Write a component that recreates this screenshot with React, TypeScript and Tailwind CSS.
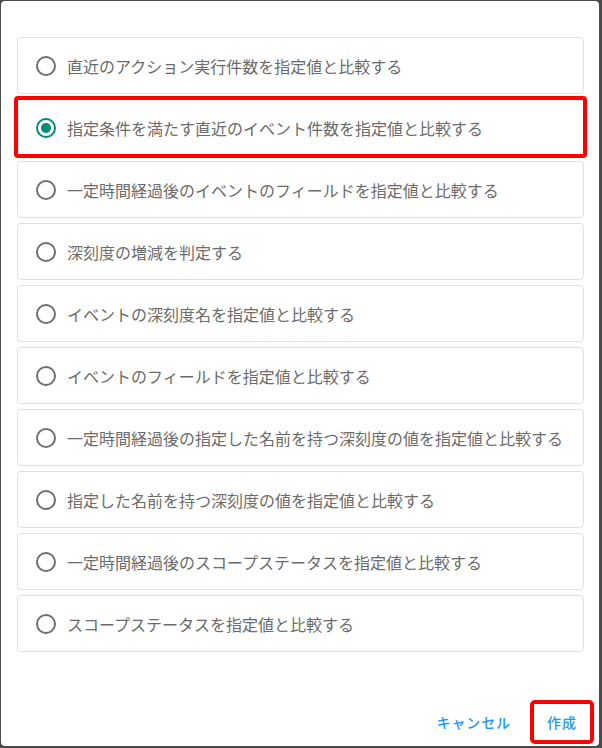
const options = [
  '直近のアクション実行件数を指定値と比較する',
  '指定条件を満たす直近のイベント件数を指定値と比較する',
  '一定時間経過後のイベントのフィールドを指定値と比較する',
  '深刻度の増減を判定する',
  'イベントの深刻度名を指定値と比較する',
  'イベントのフィールドを指定値と比較する',
  '一定時間経過後の指定した名前を持つ深刻度の値を指定値と比較する',
  '指定した名前を持つ深刻度の値を指定値と比較する',
  '一定時間経過後のスコープステータスを指定値と比較する',
  'スコープステータスを指定値と比較する',
];

const SELECTED = 1;

function Radio({ checked }: { checked: boolean }) {
  return (
    <span
      className={`flex h-[20px] w-[20px] shrink-0 items-center justify-center rounded-full border-2 ${
        checked ? 'border-[#00897b]' : 'border-[#6f6f6f]'
      }`}
    >
      {checked ? <span className="h-[10px] w-[10px] rounded-full bg-[#00897b]" /> : null}
    </span>
  );
}

export default function App() {
  return (
    <div
      className="flex h-[748px] w-[602px] bg-[#4a4a4a] pb-[2px] pl-[1px] pr-[3px] pt-[1px]"
      style={{ fontFamily: '"Noto Sans CJK JP", "Noto Sans", sans-serif' }}
    >
      <div className="flex flex-1 flex-col rounded-[4px] bg-white">
        <div className="flex flex-col gap-[5px] pl-[16px] pr-[15px] pt-[36px]">
          {options.map((label, i) => (
            <div key={label} className="relative">
              <label className="flex h-[57px] items-center gap-[11px] rounded-[4px] border border-[#e0e0e0] pl-[18px]">
                <Radio checked={i === SELECTED} />
                <span className="text-[16px] text-[#6b6b6b]">{label}</span>
              </label>
              {i === SELECTED ? (
                <span className="pointer-events-none absolute -inset-x-[3px] -bottom-[2px] -top-[3px] rounded-[4px] border-4 border-[#ff0000]" />
              ) : null}
            </div>
          ))}
        </div>

        <div className="mt-auto flex items-center justify-end gap-[11px] pb-[2px] pr-[5px]">
          <button type="button" className="h-[36px] px-2 text-[14px] font-medium tracking-[0.9px] text-[#2196f3]">
            キャンセル
          </button>
          <button
            type="button"
            className="h-[44px] w-[64px] rounded-[5px] border-4 border-[#ff0000] text-[14px] font-medium tracking-[0.9px] text-[#2196f3]"
          >
            作成
          </button>
        </div>
      </div>
    </div>
  );
}
